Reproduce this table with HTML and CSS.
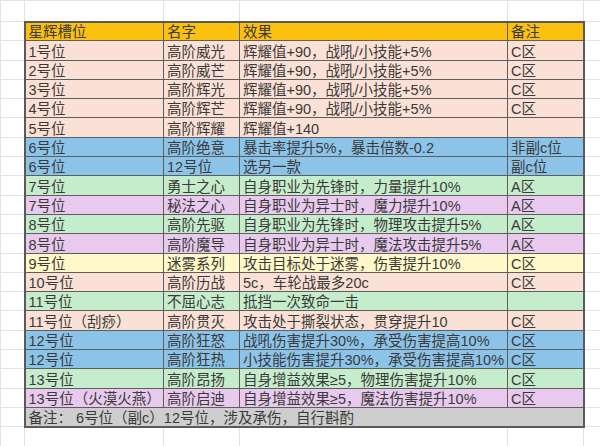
FILE: index.html
```html
<!DOCTYPE html>
<html lang="zh">
<head>
<meta charset="utf-8">
<title>星辉槽位</title>
<link rel="stylesheet" href="styles.css">
</head>
<body>
<table class="sheet">
  <colgroup>
    <col class="w-g"><col class="w-1"><col class="w-2"><col class="w-3"><col class="w-4"><col class="w-r">
  </colgroup>
  <tbody>
    <tr class="top"><td class="g"></td><td class="g"></td><td class="g"></td><td class="g"></td><td class="g"></td><td class="g"></td></tr>
    <tr class="hdr"><td class="g"></td><td class="c first">星辉槽位</td><td class="c">名字</td><td class="c">效果</td><td class="c last">备注</td><td class="g"></td></tr>
    <tr class="peach"><td class="g"></td><td class="c first">1号位</td><td class="c">高阶威光</td><td class="c">辉耀值+90，战吼/小技能+5%</td><td class="c last">C区</td><td class="g"></td></tr>
    <tr class="peach"><td class="g"></td><td class="c first">2号位</td><td class="c">高阶威芒</td><td class="c">辉耀值+90，战吼/小技能+5%</td><td class="c last">C区</td><td class="g"></td></tr>
    <tr class="peach"><td class="g"></td><td class="c first">3号位</td><td class="c">高阶辉光</td><td class="c">辉耀值+90，战吼/小技能+5%</td><td class="c last">C区</td><td class="g"></td></tr>
    <tr class="peach"><td class="g"></td><td class="c first">4号位</td><td class="c">高阶辉芒</td><td class="c">辉耀值+90，战吼/小技能+5%</td><td class="c last">C区</td><td class="g"></td></tr>
    <tr class="peach"><td class="g"></td><td class="c first">5号位</td><td class="c">高阶辉耀</td><td class="c">辉耀值+140</td><td class="c last"></td><td class="g"></td></tr>
    <tr class="blue"><td class="g"></td><td class="c first">6号位</td><td class="c">高阶绝意</td><td class="c">暴击率提升5%，暴击倍数-0.2</td><td class="c last">非副c位</td><td class="g"></td></tr>
    <tr class="blue"><td class="g"></td><td class="c first">6号位</td><td class="c">12号位</td><td class="c">选另一款</td><td class="c last">副c位</td><td class="g"></td></tr>
    <tr class="green"><td class="g"></td><td class="c first">7号位</td><td class="c">勇士之心</td><td class="c">自身职业为先锋时，力量提升10%</td><td class="c last">A区</td><td class="g"></td></tr>
    <tr class="purple"><td class="g"></td><td class="c first">7号位</td><td class="c">秘法之心</td><td class="c">自身职业为异士时，魔力提升10%</td><td class="c last">A区</td><td class="g"></td></tr>
    <tr class="green"><td class="g"></td><td class="c first">8号位</td><td class="c">高阶先驱</td><td class="c">自身职业为先锋时，物理攻击提升5%</td><td class="c last">A区</td><td class="g"></td></tr>
    <tr class="purple"><td class="g"></td><td class="c first">8号位</td><td class="c">高阶魔导</td><td class="c">自身职业为异士时，魔法攻击提升5%</td><td class="c last">A区</td><td class="g"></td></tr>
    <tr class="yellow"><td class="g"></td><td class="c first">9号位</td><td class="c">迷雾系列</td><td class="c">攻击目标处于迷雾，伤害提升10%</td><td class="c last">C区</td><td class="g"></td></tr>
    <tr class="peach"><td class="g"></td><td class="c first">10号位</td><td class="c">高阶历战</td><td class="c">5c，车轮战最多20c</td><td class="c last">C区</td><td class="g"></td></tr>
    <tr class="green"><td class="g"></td><td class="c first">11号位</td><td class="c">不屈心志</td><td class="c">抵挡一次致命一击</td><td class="c last"></td><td class="g"></td></tr>
    <tr class="peach"><td class="g"></td><td class="c first">11号位（刮痧）</td><td class="c">高阶贯灭</td><td class="c">攻击处于撕裂状态，贯穿提升10</td><td class="c last">C区</td><td class="g"></td></tr>
    <tr class="blue"><td class="g"></td><td class="c first">12号位</td><td class="c">高阶狂怒</td><td class="c">战吼伤害提升30%，承受伤害提高10%</td><td class="c last">C区</td><td class="g"></td></tr>
    <tr class="blue"><td class="g"></td><td class="c first">12号位</td><td class="c">高阶狂热</td><td class="c">小技能伤害提升30%，承受伤害提高10%</td><td class="c last">C区</td><td class="g"></td></tr>
    <tr class="green"><td class="g"></td><td class="c first">13号位</td><td class="c">高阶昂扬</td><td class="c">自身增益效果≥5，物理伤害提升10%</td><td class="c last">C区</td><td class="g"></td></tr>
    <tr class="purple"><td class="g"></td><td class="c first">13号位（火漠火燕）</td><td class="c">高阶启迪</td><td class="c">自身增益效果≥5，魔法伤害提升10%</td><td class="c last">C区</td><td class="g"></td></tr>
    <tr class="foot"><td class="g"></td><td class="c first last" colspan="4">备注：&nbsp;6号位（副c）12号位，涉及承伤，自行斟酌</td><td class="g"></td></tr>
    <tr class="tail"><td class="g"></td><td class="g"></td><td class="g"></td><td class="g"></td><td class="g"></td><td class="g"></td></tr>
  </tbody>
</table>
</body>
</html>
```
FILE: styles.css
```css
html, body {
  margin: 0;
  padding: 0;
  background: #ffffff;
  overflow: hidden;
}

.sheet {
  width: 600px;
  border-collapse: collapse;
  table-layout: fixed;
  font-family: "Liberation Sans", "Noto Sans CJK SC", sans-serif;
  font-size: 14.5px;
  color: #3a3a3a;
}

.w-g { width: 24px; }
.w-1 { width: 139px; }
.w-2 { width: 76px; }
.w-3 { width: 268px; }
.w-4 { width: 76px; }
.w-r { width: 17px; }

.sheet tr { height: 19.3px; }
.sheet tr.top { height: 21px; }

.sheet td {
  padding: 0 0 0 3px;
  line-height: 16px;
  vertical-align: bottom;
  white-space: nowrap;
  overflow: hidden;
}

.sheet td.g {
  border: 1px solid #e3e3e3;
}

.sheet td.c {
  border: 1px solid #5e5e5e;
}

.sheet td.first { border-left: 2px solid #5a5a5a; }
.sheet td.last { border-right: 2px solid #5a5a5a; }
.hdr td.c { border-top: 2px solid #5a5a5a; }
.foot td.c { border-bottom: 2px solid #5a5a5a; }

.hdr td.c { background: #fcc00e; }
.peach td.c { background: #fbe1d5; }
.blue td.c { background: #8cc4e9; }
.green td.c { background: #c5edcb; }
.purple td.c { background: #e9c9ee; }
.yellow td.c { background: #fff8c8; }
.foot td.c { background: #cecece; }
```
